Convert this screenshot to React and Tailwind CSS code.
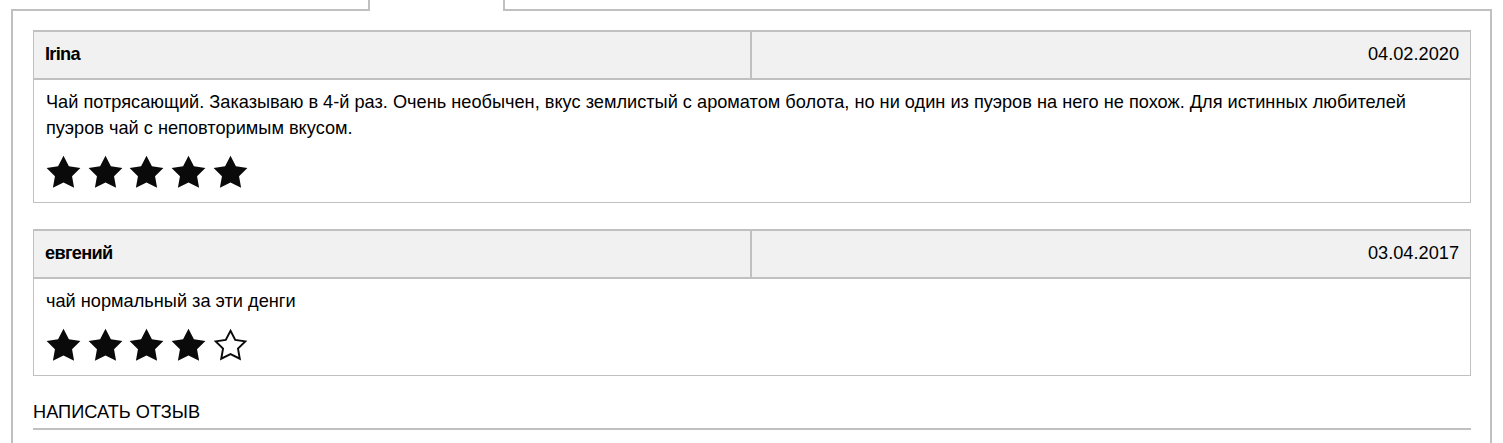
import React from "react";

const reviews = [
  {
    name: "Irina",
    date: "04.02.2020",
    text: "Чай потрясающий. Заказываю в 4-й раз. Очень необычен, вкус землистый с ароматом болота, но ни один из пуэров на него не похож. Для истинных любителей пуэров чай с неповторимым вкусом.",
    rating: 5,
  },
  {
    name: "евгений",
    date: "03.04.2017",
    text: "чай нормальный за эти денги",
    rating: 4,
  },
];

const STAR =
  "17.5,0.8 22.91,11.2 34.4,12.9 26.05,21.24 28.1,32.7 17.5,27.4 6.9,32.7 8.95,21.24 0.6,12.9 12.09,11.2";

function Star({ filled }) {
  return (
    <svg width="35" height="34" viewBox="0 0 35 34" className="shrink-0">
      {filled ? (
        <polygon points={STAR} fill="#0a0a0a" />
      ) : (
        <polygon
          points={STAR}
          fill="#fff"
          stroke="#0a0a0a"
          strokeWidth="2.2"
          strokeLinejoin="miter"
          transform="translate(2.2 2.1) scale(0.875)"
        />
      )}
    </svg>
  );
}

function Review({ review }) {
  return (
    <div className="border border-[#c0c0c0]">
      {/* header row */}
      <div className="flex h-[49px] border-t border-b-2 border-[#c0c0c0] bg-[#f1f1f1] text-[18.2px]">
        <div className="flex w-1/2 items-center border-r-2 border-[#c0c0c0] pl-[11px] font-bold tracking-[-0.7px]">
          {review.name}
        </div>
        <div className="flex w-1/2 items-center justify-end pr-[11px]">
          {review.date}
        </div>
      </div>

      {/* body */}
      <div className="px-[12px] pt-[9px] pb-[13px]">
        <p className="text-[18.2px] leading-[26px]">{review.text}</p>
        <div className="mt-[14px] flex gap-[6.7px]">
          {[1, 2, 3, 4, 5].map((i) => (
            <Star key={i} filled={i <= review.rating} />
          ))}
        </div>
      </div>
    </div>
  );
}

export default function App() {
  return (
    <div className="min-h-[443px] bg-white px-[11px] font-['Liberation_Sans',Arial,sans-serif] text-black">
      {/* tabs line */}
      <div className="flex h-[11px]">
        <div className="w-[357px] border-b-2 border-[#c0c0c0]" />
        <div className="w-[137px] border-x-2 border-[#c0c0c0]" />
        <div className="flex-1 border-b-2 border-[#c0c0c0]" />
      </div>

      {/* tab content */}
      <div className="border-x-2 border-b-2 border-[#c0c0c0] pt-[19px] pr-[19px] pb-[20px] pl-[20px]">
        <div className="flex flex-col gap-[26px]">
          {reviews.map((r) => (
            <Review key={r.date} review={r} />
          ))}
        </div>

        <div className="mt-[24px] border-b-2 border-[#c0c0c0] pb-[4px] text-[18.2px] leading-[24px] uppercase">
          Написать отзыв
        </div>
      </div>
    </div>
  );
}
